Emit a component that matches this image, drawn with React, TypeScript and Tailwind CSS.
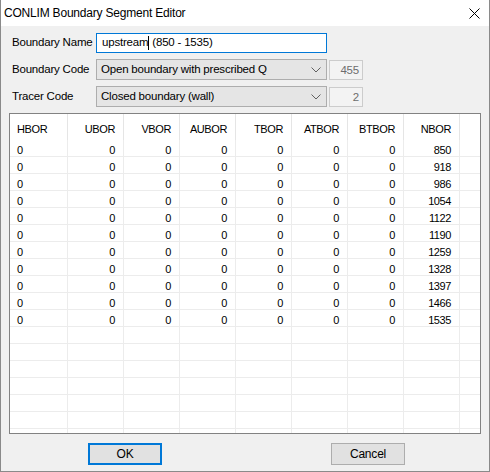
import React from "react";

const cols = ["HBOR", "UBOR", "VBOR", "AUBOR", "TBOR", "ATBOR", "BTBOR", "NBOR"];
const nbor = [850, 918, 986, 1054, 1122, 1190, 1259, 1328, 1397, 1466, 1535];

function Chevron() {
  return (
    <svg width="10" height="6" viewBox="0 0 10 6" className="text-[#606060]">
      <path d="M0.5 0.5 L5 5 L9.5 0.5" fill="none" stroke="currentColor" strokeWidth="1" />
    </svg>
  );
}

function ComboRow({ label, value, code }: { label: string; value: string; code: string }) {
  return (
    <div className="flex items-center h-[21px]">
      <div className="w-[84px] shrink-0 whitespace-nowrap text-[11.5px] text-black">{label}</div>
      <div className="w-[231px] h-[21px] bg-[#e5e5e5] border border-[#adadad] flex items-center pl-[4px] pr-[5px] text-[11.5px]">
        <span className="flex-1 whitespace-nowrap">{value}</span>
        <Chevron />
      </div>
      <div className="ml-[2px] w-[34px] h-[20px] bg-[#f3f3f3] border border-[#cccccc] text-[11.5px] text-[#6d6d6d] text-right pr-[3px] leading-[18px]">
        {code}
      </div>
    </div>
  );
}

function Row({ cells, empty }: { cells?: string[]; empty?: boolean }) {
  return (
    <div className="flex h-[17px] border-b border-[#ececec] shrink-0">
      {cols.map((c, i) => (
        <div
          key={c}
          className={`${i === 0 ? "w-[58px] text-left pl-[7px]" : "w-[56px] text-right pr-[8px]"} border-r border-[#ececec] leading-[21px]`}
        >
          {empty ? "" : cells?.[i]}
        </div>
      ))}
      <div className="flex-1" />
    </div>
  );
}

export default function App() {
  return (
    <div
      className="w-[490px] h-[472px] bg-[#f0f0f0] border-x border-b border-[#8a8a8a] flex flex-col tracking-[-0.2px]"
      style={{ fontFamily: '"Liberation Sans", Arial, sans-serif' }}
    >
      <div className="h-[26px] bg-white flex items-center pl-[3px] relative">
        <span className="text-[12px] text-black">CONLIM Boundary Segment Editor</span>
        <svg width="11" height="11" viewBox="0 0 11 11" className="absolute left-[468px] top-[8px]">
          <path d="M0.5 0.5 L10.5 10.5 M10.5 0.5 L0.5 10.5" stroke="#000" strokeWidth="1" />
        </svg>
      </div>

      <div className="flex flex-col pl-[11px] pt-[7px] gap-[6px]">
        <div className="flex items-center h-[20px]">
          <div className="w-[84px] shrink-0 whitespace-nowrap text-[11.5px] text-black">Boundary Name</div>
          <div className="w-[231px] h-[20px] bg-white border border-[#0078d7] flex items-center pl-[5px] text-[11.5px] whitespace-pre">
            <span>upstream</span>
            <span className="w-px h-[14px] bg-black" />
            <span> (850 - 1535)</span>
          </div>
        </div>
        <ComboRow label="Boundary Code" value="Open boundary with prescribed Q" code="455" />
        <ComboRow label="Tracer Code" value="Closed boundary (wall)" code="2" />
      </div>

      <div className="ml-[8px] mt-[6px] w-[472px] h-[321px] border border-[#828282] bg-white overflow-hidden flex flex-col text-[11px] text-black tracking-[-0.4px]">
        <div className="flex h-[26px] shrink-0">
          {cols.map((c, i) => (
            <div
              key={c}
              className={`${i === 0 ? "w-[58px] justify-start pl-[7px]" : "w-[56px] justify-end pr-[8px]"} border-r border-[#e5e5e5] flex items-center pt-[4px]`}
            >
              {c}
            </div>
          ))}
          <div className="flex-1" />
        </div>
        {nbor.map((n) => (
          <Row key={n} cells={["0", "0", "0", "0", "0", "0", "0", String(n)]} />
        ))}
        {Array.from({ length: 7 }).map((_, i) => (
          <Row key={`e${i}`} empty />
        ))}
      </div>

      <div className="flex mt-[9px] text-[12px]">
        <div className="ml-[87px] w-[74px] h-[22px] bg-[#e1e1e1] border-2 border-[#0078d7] flex items-center justify-center">
          OK
        </div>
        <div className="ml-[169px] w-[74px] h-[22px] bg-[#e1e1e1] border border-[#adadad] flex items-center justify-center">
          Cancel
        </div>
      </div>
    </div>
  );
}
